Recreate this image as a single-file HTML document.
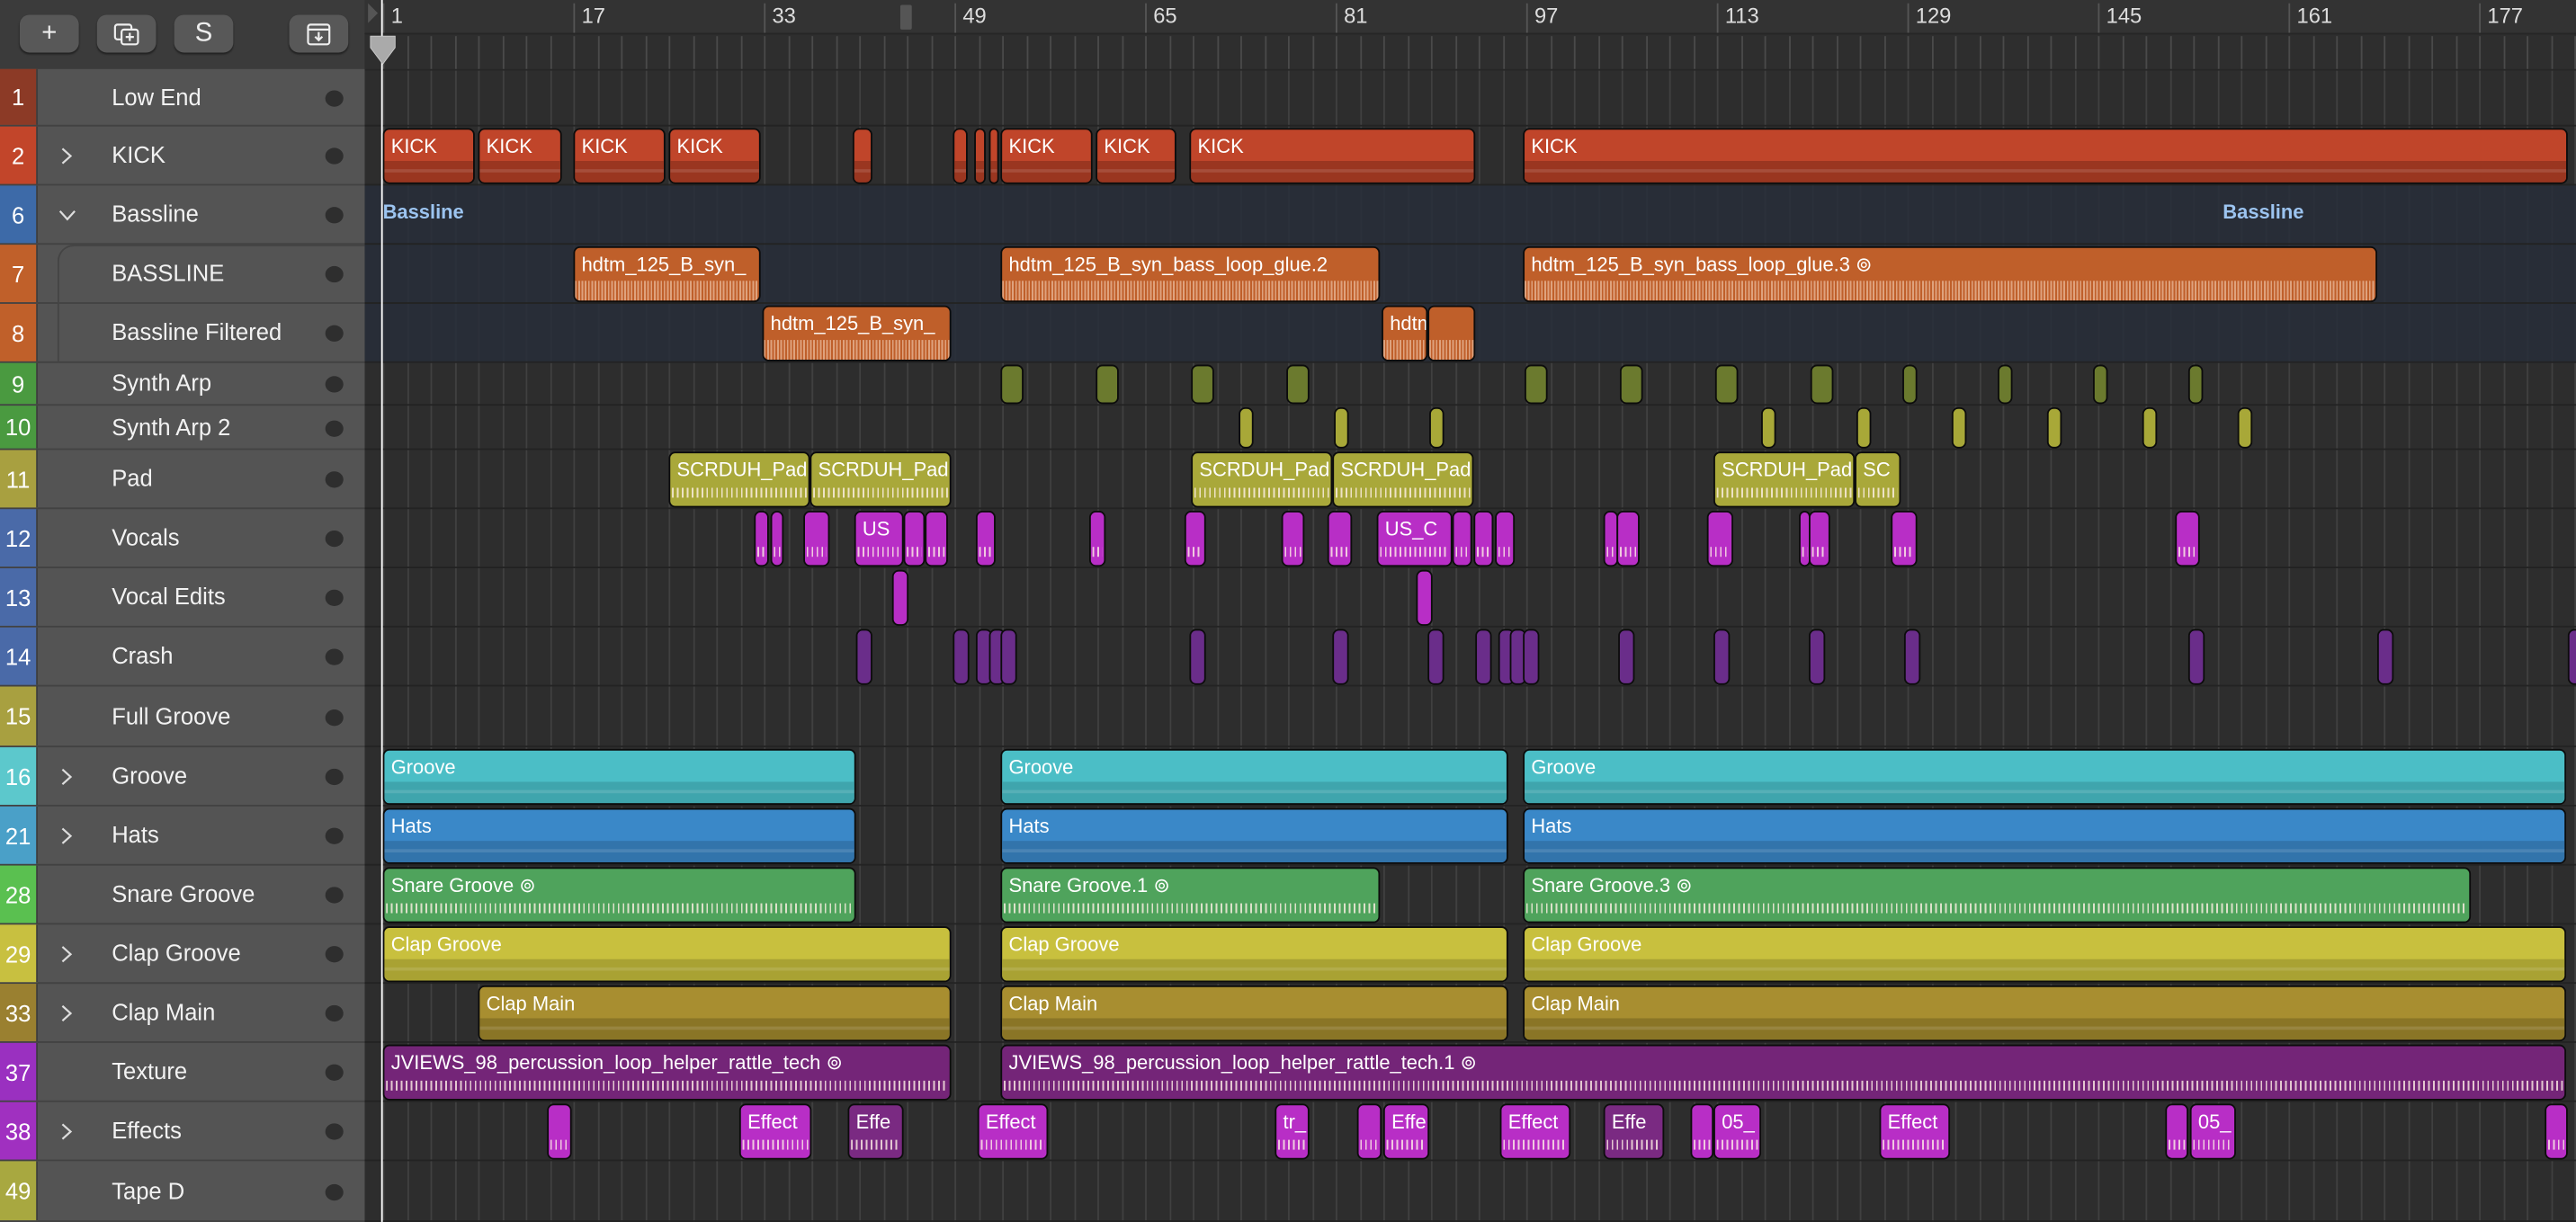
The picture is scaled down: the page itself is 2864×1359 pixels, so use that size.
<!DOCTYPE html>
<html><head><meta charset="utf-8">
<style>
html,body{margin:0;padding:0;background:#2c2c2c;overflow:hidden;width:2864px;height:1358px}
#w{position:absolute;left:0;top:0;width:1568px;height:744px;transform:scale(1.826531);transform-origin:0 0;font-family:"Liberation Sans",sans-serif;background:#2d2d2d;overflow:hidden}
.abs{position:absolute}
.hdr{left:0;top:0;width:222px;height:42px;background:#3b3b3b;border-bottom:1px solid #2a2a2a}
.btn{position:absolute;top:9px;height:23px;width:36px;background:#585858;border-radius:6px;box-shadow:0 1px 1px #222;color:#eee;text-align:center;line-height:23px;font-size:16px}
.tl{left:0;width:222px;background:#545454;border-bottom:1px solid #424242;box-sizing:border-box}
.num{position:absolute;left:0;top:0;bottom:0;width:22px;color:#fff;font-size:14px;text-align:center;border-right:1px solid #3e3e3e}
.nm{position:absolute;left:68px;color:#f2f2f2;font-size:14px;white-space:nowrap}
.dot{position:absolute;left:198px;width:11px;height:10px;border-radius:50%;background:#2e2e2e}
.chev{position:absolute;left:35px}
.row{left:222px;width:1346px;border-bottom:1px solid #232323;box-sizing:border-box}
.rg{position:absolute;border:1px solid #0c0c0c;border-radius:4px;box-sizing:border-box;overflow:hidden;color:#fff;font-size:12px;white-space:nowrap}
.rg span{position:absolute;left:4px;top:3px}
.band{position:absolute;left:0;right:0;bottom:0}
</style></head><body>
<div id="w">
<div id="grid" class="abs" style="left:222px;top:0;width:1346px;height:744px"></div>
<div class="abs hdr">
 <div class="btn" style="left:12px">+</div>
 <div class="btn" style="left:59px"><svg width="16" height="14" viewBox="0 0 16 14" style="margin-top:5px"><rect x="1" y="1" width="10" height="9" rx="1.5" fill="none" stroke="#eee" stroke-width="1.2"/><rect x="5" y="4" width="10" height="9" rx="1.5" fill="#585858" stroke="#eee" stroke-width="1.2"/><path d="M10 6v5M7.5 8.5h5" stroke="#eee" stroke-width="1.2"/></svg></div>
 <div class="btn" style="left:106px">S</div>
 <div class="btn" style="left:176px"><svg width="16" height="14" viewBox="0 0 16 14" style="margin-top:5px"><rect x="1.5" y="1" width="13" height="12" rx="1.5" fill="none" stroke="#eee" stroke-width="1.2"/><path d="M1.5 4h13M8 5.5v5M5.8 8.3L8 10.5l2.2-2.2" fill="none" stroke="#eee" stroke-width="1.2"/></svg></div>
</div>
<div id="tl"></div>
<div id="rows"></div>
<div id="regs"></div>
<div class="abs" style="left:222px;top:0;width:1346px;height:42px;background:#333;border-bottom:1px solid #262626" id="ruler"></div>
<div class="abs" style="left:232px;top:0;width:1px;height:744px;background:#fff"></div>
<svg class="abs" style="left:222px;top:0" width="30" height="42"><path d="M2 2l6 6-6 6z" fill="#555"/><path d="M3.5 22h15v7l-7.5 10l-7.5-10z" fill="#aaa" stroke="#ccc" stroke-width="0.5"/></svg>
</div>
<script>
const W=document.getElementById('w');
function el(h){const d=document.createElement('div');d.innerHTML=h;return d.firstChild;}
const X=b=>233+(b-1)*7.25;
const R=document.getElementById('ruler');
let rh='<div class="abs" style="left:0;top:21px;width:1346px;height:21px;background:#2e2e2e"></div>';
for(let b=1;b<=186;b+=2){const x=X(b)-222;rh+=`<div class="abs" style="left:${x}px;top:22px;width:1px;height:20px;background:#4a4a4a"></div>`;}
[1,17,33,49,65,81,97,113,129,145,161,177].forEach(b=>{const x=X(b)-222;rh+=`<div class="abs" style="left:${x}px;top:2px;width:1px;height:18px;background:#555"></div><div class="abs" style="left:${x+5}px;top:2px;color:#ddd;font-size:13px">${b}</div>`;});
rh+=`<div class="abs" style="left:0;top:20px;width:1346px;height:1px;background:#262626"></div><div class="abs" style="left:326px;top:3px;width:7px;height:15px;background:#555;border-radius:1px"></div>`;
R.innerHTML=rh;
const G=document.getElementById('grid');let gh='';
for(let b=1;b<=186;b+=2){gh+=`<div class="abs" style="left:${X(b)-222}px;top:42px;width:1px;height:702px;background:#404040"></div>`;}
G.innerHTML=gh;
const rows=[
[1,42,35,'#8c3a26','Low End',''],
[2,77,36,'#c2452a','KICK','›'],
[6,113,36,'#3d6aa8','Bassline','⌄'],
[7,149,36,'#c0602a','BASSLINE','s'],
[8,185,36,'#c0602a','Bassline Filtered','s'],
[9,221,26,'#4a9a40','Synth Arp',''],
[10,247,27,'#4a9a40','Synth Arp 2',''],
[11,274,36,'#a8a040','Pad',''],
[12,310,36,'#4a6aa8','Vocals',''],
[13,346,36,'#4a6aa8','Vocal Edits',''],
[14,382,36,'#4a6aa8','Crash',''],
[15,418,37,'#a8a040','Full Groove',''],
[16,455,36,'#5cc8cc','Groove','›'],
[21,491,36,'#4aa0c8','Hats','›'],
[28,527,36,'#5ac050','Snare Groove',''],
[29,563,36,'#c8c040','Clap Groove','›'],
[33,599,36,'#9a8030','Clap Main','›'],
[37,635,36,'#9a30c0','Texture',''],
[38,671,36,'#a030c0','Effects','›'],
[49,707,37,'#a8a840','Tape D','']];
const Y={};
rows.forEach(r=>{const[n,y,h,c,name,ch]=r;Y[n]=[y,h];
 let inner=`<div class="num" style="background:${c};line-height:${h}px">${n}</div>`;
 if(ch=='›')inner+=`<svg class="chev" style="top:${h/2-6}px" width="10" height="12"><path d="M3 1.5l5 4.5-5 4.5" fill="none" stroke="#ddd" stroke-width="1.2"/></svg>`;
 if(ch=='⌄')inner+=`<svg class="chev" style="top:${h/2-6}px" width="12" height="12"><path d="M1.5 3.5l4.5 5 4.5-5" fill="none" stroke="#ddd" stroke-width="1.2"/></svg>`;
 if(ch=='s')inner+=`<div class="abs" style="left:35px;top:${n==7?0:-1}px;right:0;bottom:0;border-left:1px solid #444;border-top:1px solid #444;${n==7?'border-top-left-radius:10px;':''}"></div>`;
 inner+=`<div class="nm" style="top:${h/2-9}px">${name}</div><div class="dot" style="top:${h/2-5}px"></div>`;
 W.appendChild(el(`<div class="abs tl" style="top:${y}px;height:${h}px">${inner}</div>`));
 const bg=(n==6||n==7||n==8)?'rgba(40,46,58,0.85)':'transparent';
 W.insertBefore(el(`<div class="abs row" style="top:${y}px;height:${h}px;background:${bg}"></div>`),document.getElementById('grid').nextSibling);
});
W.appendChild(el(`<div class="abs" style="left:233px;top:122px;color:#9cc4f0;font-size:12px;font-weight:bold">Bassline</div>`));
W.appendChild(el(`<div class="abs" style="left:1353px;top:122px;color:#9cc4f0;font-size:12px;font-weight:bold">Bassline</div>`));
function rg(row,x1,x2,c,label,type,dk){const[y,h]=Y[row];
 let band='';
 if(type=='m')band=`<div class="band" style="height:40%;background:${dk};"><div style="height:2px;margin-top:5px;background:rgba(255,255,255,0.12)"></div></div>`;
 else if(type=='a')band=`<div class="band" style="height:38%;background:repeating-linear-gradient(90deg,rgba(255,230,210,0.55) 0 1px,transparent 1px 2px);opacity:0.9"></div>`;
 else if(type=='s')band=`<div class="band" style="bottom:5px;background:repeating-linear-gradient(90deg,rgba(255,240,230,0.8) 0 1px,transparent 1px 3px);height:6px;left:1px;right:1px"></div>`;
 W.appendChild(el(`<div class="rg" style="left:${x1}px;top:${y+1}px;width:${x2-x1}px;height:${h-2}px;background:${c}">${label?'<span>'+label+'</span>':''}${band}</div>`));}
const K='#c0452a',KD='#9a3620';
[[233,289,'KICK'],[291,342,'KICK'],[349,405,'KICK'],[407,463,'KICK'],[519,531,''],[580,589,''],[593,600,''],[602,608,''],[609,665,'KICK'],[667,716,'KICK'],[724,898,'KICK'],[927,1563,'KICK']].forEach(a=>rg(2,a[0],a[1],K,a[2],'m',KD));
const O='#bf5f2a';
rg(7,349,463,O,'hdtm_125_B_syn_','a');rg(7,609,840,O,'hdtm_125_B_syn_bass_loop_glue.2','a');rg(7,927,1447,O,'hdtm_125_B_syn_bass_loop_glue.3 ⊚','a');
rg(8,464,579,O,'hdtm_125_B_syn_','a');rg(8,841,869,O,'hdtm_12','a');rg(8,869,898,O,'','a');
[609,667,725,783,928,986,1044,1102].forEach(x=>rg(9,x,x+14,'#6b7a2e','',''));
[1158,1216,1274,1332].forEach(x=>rg(9,x,x+9,'#6b7a2e','',''));
[754,812,870,1072,1130,1188,1246,1304,1362].forEach(x=>rg(10,x,x+9,'#a8a838','',''));
const P='#a9a83a';
[[407,493,'SCRDUH_Pad'],[493,579,'SCRDUH_Pad'],[725,811,'SCRDUH_Pad'],[811,897,'SCRDUH_Pad'],[1043,1129,'SCRDUH_Pad'],[1129,1157,'SC']].forEach(a=>rg(11,a[0],a[1],P,a[2],'s'));
const M='#b82ec6';
[[459,468],[469,477],[489,505],[520,550,'US'],[550,563],[563,577],[594,606],[663,673],[721,734],[780,794],[808,823],[838,884,'US_C'],[884,896],[897,909],[910,922],[976,985],[984,998],[1039,1055],[1095,1102],[1101,1114],[1151,1167],[1324,1339]].forEach(a=>rg(12,a[0],a[1],M,a[2]||'','s'));
rg(13,543,553,M,'','');rg(13,862,872,M,'','');
[521,580,594,602,609,724,811,869,898,912,919,927,985,1043,1101,1159,1332,1447,1563].forEach(x=>rg(14,x,x+10,'#6a2d8a','',''));
[[233,521],[609,918],[927,1562]].forEach(a=>{rg(16,a[0],a[1],'#4bbec6','Groove','m','#3fa5ad');rg(21,a[0],a[1],'#3a88c8','Hats','m','#3274ab');rg(29,a[0],a[1]<600?579:a[1],'#c8c03e','Clap Groove','m','#a9a233');});
rg(33,291,579,'#a88e30','Clap Main','m','#8a7526');rg(33,609,918,'#a88e30','Clap Main','m','#8a7526');rg(33,927,1562,'#a88e30','Clap Main','m','#8a7526');
const S='#4fa35c';
rg(28,233,521,S,'Snare Groove ⊚','s');rg(28,609,840,S,'Snare Groove.1 ⊚','s');rg(28,927,1504,S,'Snare Groove.3 ⊚','s');
const T='#742578';
rg(37,233,579,T,'JVIEWS_98_percussion_loop_helper_rattle_tech ⊚','s');rg(37,609,1562,T,'JVIEWS_98_percussion_loop_helper_rattle_tech.1 ⊚','s');
[[333,348],[450,494,'Effect'],[516,550,'Effe',1],[595,638,'Effect'],[776,797,'tr_'],[826,841],[842,870,'Effe'],[913,956,'Effect'],[976,1013,'Effe',1],[1029,1043],[1043,1072,'05_'],[1144,1187,'Effect'],[1318,1332],[1333,1361,'05_'],[1549,1563]].forEach(a=>rg(38,a[0],a[1],a[3]?'#7a2a82':M,a[2]||'','s'));
</script>
</body></html>
